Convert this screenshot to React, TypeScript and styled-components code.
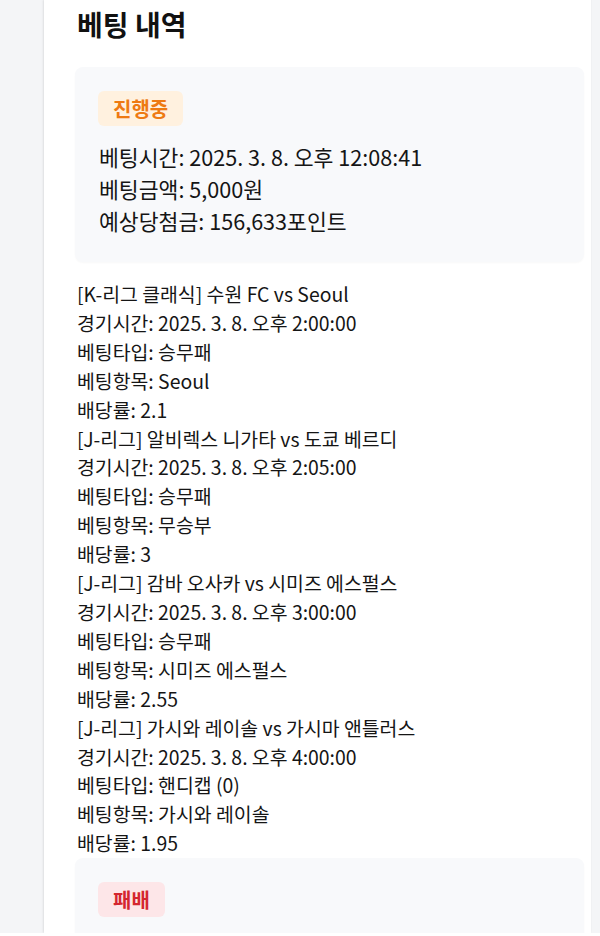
import React from "react";
import styled, { createGlobalStyle } from "styled-components";

const Global = createGlobalStyle`
  html, body { margin: 0; padding: 0; background: #ffffff; }
  body { font-family: "Noto Sans CJK KR", "Noto Sans", sans-serif; color: #111; }
`;

const Screen = styled.div`
  height: 933px;
  overflow: hidden;
  background: #f4f5f7;
  padding-left: 44px;
`;

const Panel = styled.div`
  width: 547px;
  height: 100%;
  background: #ffffff;
  box-shadow: -1px 0 2px rgba(0, 0, 0, 0.08), 0 -1px 2px rgba(0, 0, 0, 0.04);
  padding: 7px 0 0 31px;
  box-sizing: border-box;
`;

const Title = styled.h2`
  margin: 0 0 25px 2px;
  font-size: 28px;
  line-height: 35px;
  font-weight: 700;
  color: #111;
`;

const Bet = styled.section`
  display: flex;
  flex-direction: column;
`;

const Card = styled.div`
  width: 509px;
  box-sizing: border-box;
  background: #f8f9fb;
  border-radius: 8px;
  padding: 24px 24px 25px 23px;
  box-shadow: 0 1px 2px rgba(0, 0, 0, 0.03);
`;

const Badge = styled.span<{ $tone: "progress" | "lose" }>`
  display: inline-flex;
  align-items: center;
  justify-content: center;
  height: 35px;
  padding: 0 15px;
  border-radius: 6px;
  font-size: 20px;
  font-weight: 700;
  background: ${(p) => (p.$tone === "progress" ? "#fff1df" : "#fde6e8")};
  color: ${(p) => (p.$tone === "progress" ? "#ee7a12" : "#d4262f")};
`;

const Summary = styled.div`
  margin: 15px 0 0 1px;
  display: flex;
  flex-direction: column;
`;

const SummaryLine = styled.div`
  font-size: 21.6px;
  line-height: 32px;
  color: #151515;
`;

const Details = styled.div`
  margin: 18px 0 0 2px;
  display: flex;
  flex-direction: column;
`;

const DetailLine = styled.div`
  font-size: 19.4px;
  line-height: 28.9px;
  color: #151515;
`;

type Game = {
  title: string;
  time: string;
  type: string;
  pick: string;
  odds: string;
};

const games: Game[] = [
  { title: "[K-리그 클래식] 수원 FC vs Seoul", time: "2025. 3. 8. 오후 2:00:00", type: "승무패", pick: "Seoul", odds: "2.1" },
  { title: "[J-리그] 알비렉스 니가타 vs 도쿄 베르디", time: "2025. 3. 8. 오후 2:05:00", type: "승무패", pick: "무승부", odds: "3" },
  { title: "[J-리그] 감바 오사카 vs 시미즈 에스펄스", time: "2025. 3. 8. 오후 3:00:00", type: "승무패", pick: "시미즈 에스펄스", odds: "2.55" },
  { title: "[J-리그] 가시와 레이솔 vs 가시마 앤틀러스", time: "2025. 3. 8. 오후 4:00:00", type: "핸디캡 (0)", pick: "가시와 레이솔", odds: "1.95" },
];

export default function App() {
  return (
    <>
      <Global />
      <Screen>
        <Panel>
          <Title>베팅 내역</Title>
          <Bet>
            <Card>
              <Badge $tone="progress">진행중</Badge>
              <Summary>
                <SummaryLine>베팅시간: 2025. 3. 8. 오후 12:08:41</SummaryLine>
                <SummaryLine>베팅금액: 5,000원</SummaryLine>
                <SummaryLine>예상당첨금: 156,633포인트</SummaryLine>
              </Summary>
            </Card>
            <Details>
              {games.map((g) => (
                <React.Fragment key={g.title}>
                  <DetailLine>{g.title}</DetailLine>
                  <DetailLine>경기시간: {g.time}</DetailLine>
                  <DetailLine>베팅타입: {g.type}</DetailLine>
                  <DetailLine>베팅항목: {g.pick}</DetailLine>
                  <DetailLine>배당률: {g.odds}</DetailLine>
                </React.Fragment>
              ))}
            </Details>
          </Bet>
          <Bet>
            <Card>
              <Badge $tone="lose">패배</Badge>
            </Card>
          </Bet>
        </Panel>
      </Screen>
    </>
  );
}
